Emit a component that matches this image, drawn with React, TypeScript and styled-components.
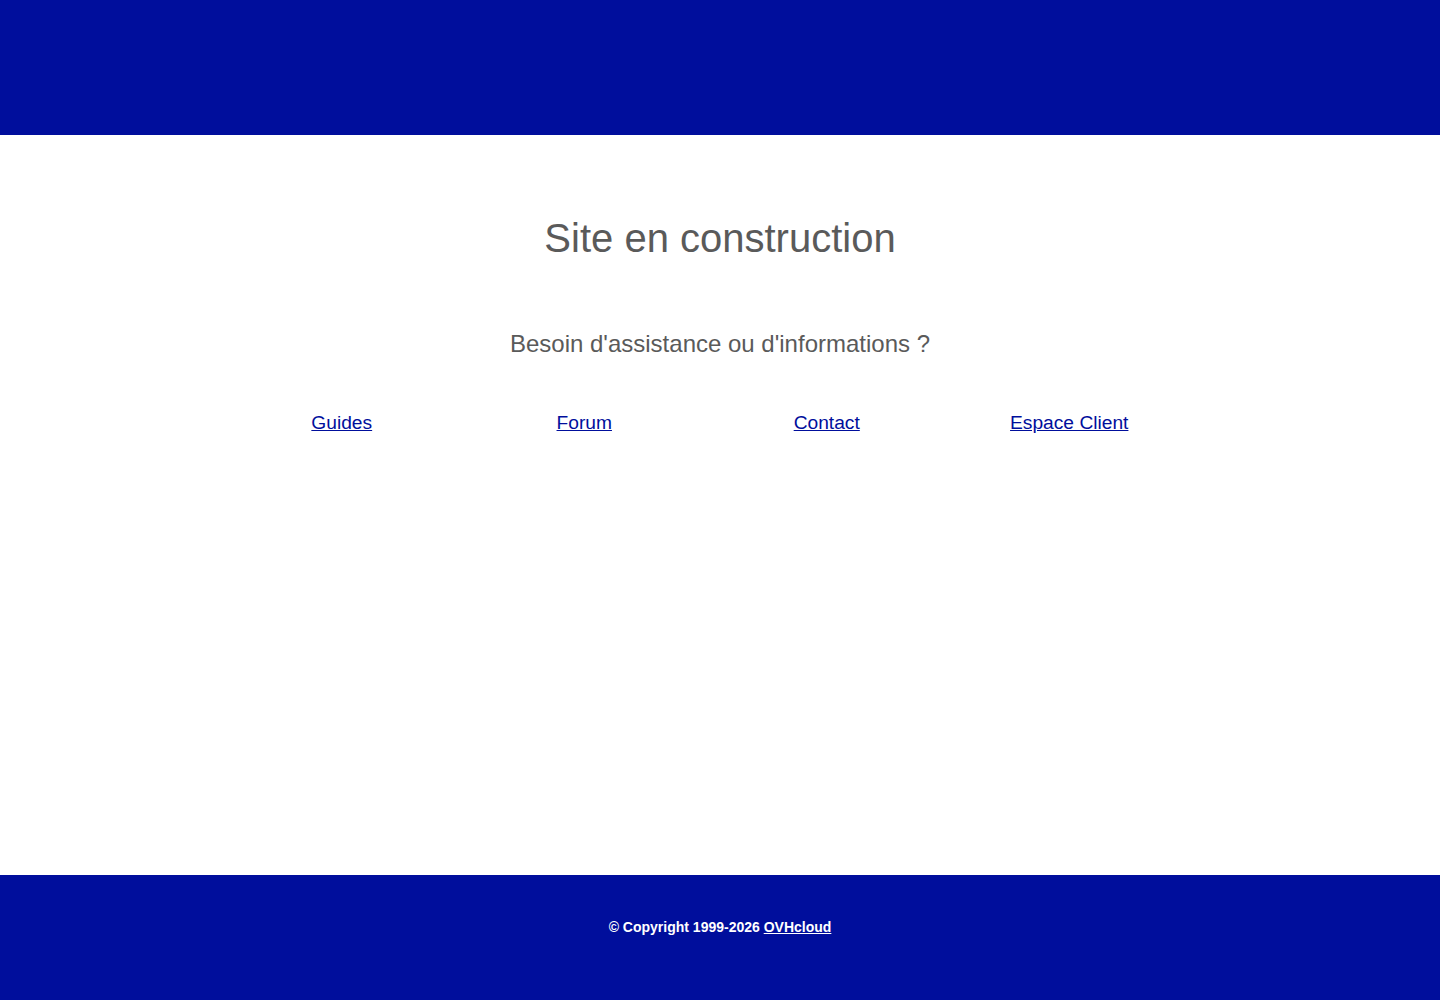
import React from 'react';
import styled, {createGlobalStyle} from 'styled-components';

const GlobalStyle = createGlobalStyle`
  html, body {
    margin: 0;
    padding: 0;
    background: #ffffff;
    font-family: "Liberation Sans", Arial, sans-serif;
  }
`;

const links = [
    {label: 'Guides', href: '#guides'},
    {label: 'Forum', href: '#forum'},
    {label: 'Contact', href: '#contact'},
    {label: 'Espace Client', href: '#espace-client'},
];

const App = () => {
    return (
        <Page>
            <GlobalStyle/>
            <TopBar/>
            <Main>
                <Title>Site en construction</Title>
                <SubTitle>Besoin d'assistance ou d'informations ?</SubTitle>
                <LinkList>
                    {links.map(link => (
                        <LinkItem key={link.label}>
                            <HelpLink href={link.href}>{link.label}</HelpLink>
                        </LinkItem>
                    ))}
                </LinkList>
            </Main>
            <Footer>
                <Copyright>
                    © Copyright 1999-2026 <FooterLink href="#ovhcloud">OVHcloud</FooterLink>
                </Copyright>
            </Footer>
        </Page>
    );
};

const Page = styled.div`
    min-height: 100vh;
    display: flex;
    flex-direction: column;
`;

const TopBar = styled.header`
    height: 135px;
    background: #000e9c;
    flex-shrink: 0;
`;

const Main = styled.main`
    flex: 1;
    display: flex;
    flex-direction: column;
    align-items: center;
    padding-top: 80px;
`;

const Title = styled.h1`
    margin: 0;
    font-size: 40px;
    line-height: 46px;
    font-weight: 400;
    color: #5a5a5a;
    text-align: center;
`;

const SubTitle = styled.h2`
    margin: 69px 0 0;
    font-size: 24px;
    line-height: 28px;
    font-weight: 400;
    color: #5a5a5a;
    text-align: center;
`;

const LinkList = styled.ul`
    list-style: none;
    margin: 54px 0 0;
    padding: 0 29.5px 0 0.5px;
    width: 1000px;
    box-sizing: border-box;
    display: grid;
    grid-template-columns: repeat(4, 1fr);
`;

const LinkItem = styled.li`
    text-align: center;
`;

const HelpLink = styled.a`
    font-size: 19.2px;
    line-height: 22px;
    color: #000e9c;
    text-decoration: underline;
`;

const Footer = styled.footer`
    height: 125px;
    box-sizing: border-box;
    padding-top: 44px;
    background: #000e9c;
    flex-shrink: 0;
`;

const Copyright = styled.p`
    margin: 0;
    font-size: 14px;
    line-height: 16px;
    font-weight: 700;
    color: #ffffff;
    text-align: center;
`;

const FooterLink = styled.a`
    color: #ffffff;
    text-decoration: underline;
`;

export default App;
